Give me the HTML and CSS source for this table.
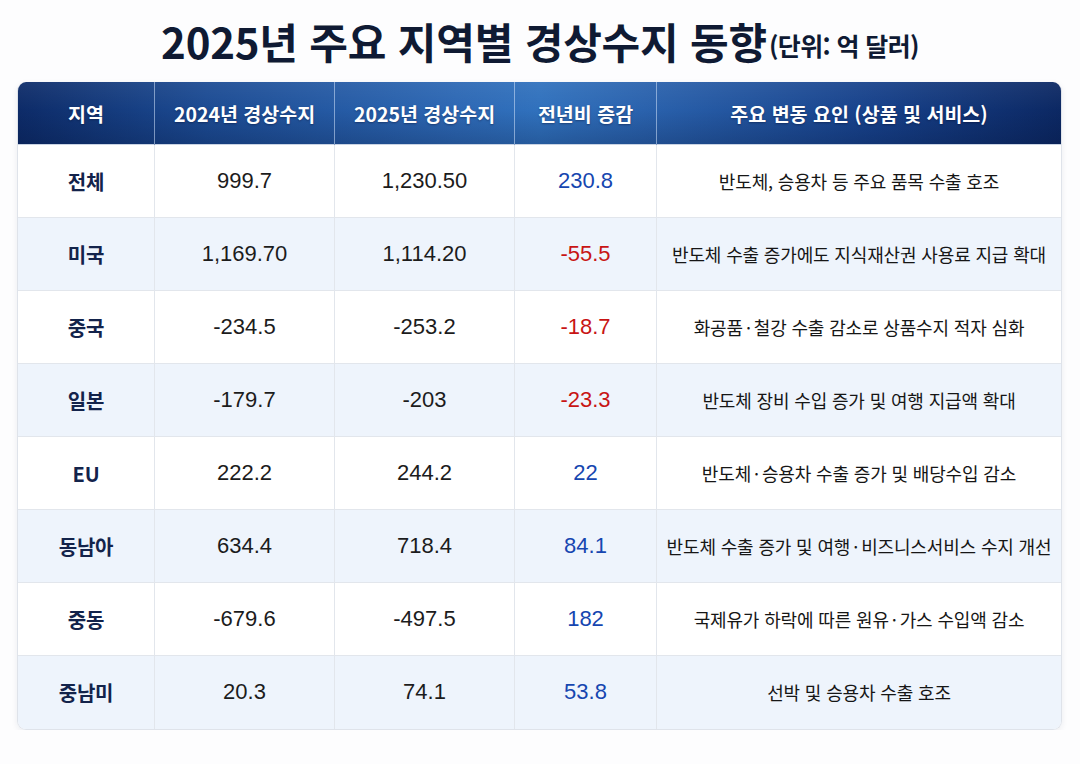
FILE: index.html
```html
<!DOCTYPE html>
<html lang="ko">
<head>
<meta charset="utf-8">
<title>2025년 주요 지역별 경상수지 동향</title>
<link rel="stylesheet" href="styles.css">
</head>
<body>
<h1 class="title">2025년 주요 지역별 경상수지 동향<span class="unit">(단위: 억 달러)</span></h1>
<div class="table-wrap">
  <table class="data">
    <thead>
      <tr>
        <th class="c-region">지역</th>
        <th class="c-num">2024년 경상수지</th>
        <th class="c-num">2025년 경상수지</th>
        <th class="c-diff">전년비 증감</th>
        <th class="c-reason">주요 변동 요인 (상품 및 서비스)</th>
      </tr>
    </thead>
    <tbody>
      <tr><td class="region">전체</td><td class="num">999.7</td><td class="num">1,230.50</td><td class="num pos">230.8</td><td class="reason">반도체, 승용차 등 주요 품목 수출 호조</td></tr>
      <tr><td class="region">미국</td><td class="num">1,169.70</td><td class="num">1,114.20</td><td class="num neg">-55.5</td><td class="reason">반도체 수출 증가에도 지식재산권 사용료 지급 확대</td></tr>
      <tr><td class="region">중국</td><td class="num">-234.5</td><td class="num">-253.2</td><td class="num neg">-18.7</td><td class="reason">화공품<span class="dot">·</span>철강 수출 감소로 상품수지 적자 심화</td></tr>
      <tr><td class="region">일본</td><td class="num">-179.7</td><td class="num">-203</td><td class="num neg">-23.3</td><td class="reason">반도체 장비 수입 증가 및 여행 지급액 확대</td></tr>
      <tr><td class="region">EU</td><td class="num">222.2</td><td class="num">244.2</td><td class="num pos">22</td><td class="reason">반도체<span class="dot">·</span>승용차 수출 증가 및 배당수입 감소</td></tr>
      <tr><td class="region">동남아</td><td class="num">634.4</td><td class="num">718.4</td><td class="num pos">84.1</td><td class="reason">반도체 수출 증가 및 여행<span class="dot">·</span>비즈니스서비스 수지 개선</td></tr>
      <tr><td class="region">중동</td><td class="num">-679.6</td><td class="num">-497.5</td><td class="num pos">182</td><td class="reason">국제유가 하락에 따른 원유<span class="dot">·</span>가스 수입액 감소</td></tr>
      <tr><td class="region">중남미</td><td class="num">20.3</td><td class="num">74.1</td><td class="num pos">53.8</td><td class="reason">선박 및 승용차 수출 호조</td></tr>
    </tbody>
  </table>
</div>
</body>
</html>
```
FILE: styles.css
```css
html, body {
  margin: 0;
  padding: 0;
  background: #fdfdfe;
}
body {
  font-family: "Noto Sans CJK KR", "Noto Sans", sans-serif;
  color: #1a1a1a;
}
.title {
  margin: 0;
  height: 82px;
  display: flex;
  align-items: center;
  justify-content: center;
  font-size: 42px;
  font-weight: 700;
  letter-spacing: -0.2px;
  color: #0f1a33;
  line-height: 1;
}
.unit {
  font-size: 25px;
  font-weight: 700;
  letter-spacing: -0.6px;
  margin-left: 2px;
  margin-top: 8px;
}
.table-wrap {
  margin: 0 17px;
  width: 1045px;
  border: 1px solid #dfe3ea;
  border-top: none;
  border-radius: 9px;
  overflow: hidden;
  box-shadow: 0 2px 6px rgba(20, 40, 80, 0.08);
  box-sizing: border-box;
}
.data {
  width: 100%;
  border-collapse: collapse;
  table-layout: fixed;
}
.data th {
  height: 62px;
  padding: 0;
  color: #ffffff;
  font-size: 19.5px;
  font-weight: 700;
  letter-spacing: 0;
  text-align: center;
  border-left: 1px solid rgba(210, 225, 250, 0.55);
  text-shadow: 0 1px 2px rgba(0, 0, 30, 0.35);
}
.data th:first-child { border-left: none; }
.data thead tr {
  background:
    linear-gradient(180deg, rgba(255,255,255,0.06) 0%, rgba(255,255,255,0) 45%, rgba(0,10,40,0.22) 100%),
    linear-gradient(90deg, #0d2b68 0%, #1c4b93 18%, #2d68b4 42%, #3071bd 50%, #2a62ad 60%, #17418a 82%, #0c2863 100%);
}
.c-region { width: 136px; }
.c-num { width: 179px; }
.c-diff { width: 141px; }
.c-reason { width: auto; }
.data td {
  height: 73px;
  padding: 0;
  text-align: center;
  border-left: 1px solid #e2e6ec;
  border-top: 1px solid #e2e6ec;
  box-sizing: border-box;
}
.data td:first-child { border-left: none; }
.data tbody tr:first-child td { border-top: 1px solid #c9d3e3; }
.data tbody tr:nth-child(even) { background: #eef4fc; }
.data tbody tr:nth-child(odd) { background: #ffffff; }
.region {
  font-size: 20px;
  font-weight: 700;
  color: #13234b;
  letter-spacing: -0.2px;
}
.num {
  font-family: "Liberation Sans", Arial, sans-serif;
  font-size: 22px;
  color: #1c1c1c;
}
.pos { color: #1646b0; }
.neg { color: #c81414; }
.reason {
  font-size: 18px;
  letter-spacing: -0.15px;
  color: #161616;
}
.dot {
  margin: 0 3px;
}
```
